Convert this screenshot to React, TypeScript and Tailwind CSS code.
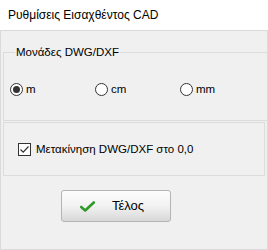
import { useState } from 'react'

type Unit = 'm' | 'cm' | 'mm'

function Radio({ checked, label, onClick }: { checked: boolean; label: string; onClick: () => void }) {
  return (
    <button onClick={onClick} className="flex items-center gap-[3px] w-[85px] text-left">
      <span className="w-[13px] h-[13px] rounded-full border border-[#333333] bg-white flex items-center justify-center">
        {checked && <span className="w-[7px] h-[7px] rounded-full bg-[#333333]" />}
      </span>
      <span className="leading-[14px]">{label}</span>
    </button>
  )
}

export default function App() {
  const [unit, setUnit] = useState<Unit>('m')
  const [moveOrigin, setMoveOrigin] = useState(true)

  return (
    <div className="w-[268px] h-[250px] bg-white text-[11.5px] text-black font-['Liberation_Sans',Arial,sans-serif]">
      {/* Title bar */}
      <div className="h-[30px] pl-[8px] flex items-center text-[12px]">Ρυθμίσεις Εισαχθέντος CAD</div>

      {/* Dialog body */}
      <div className="h-[220px] bg-[#f0f0f0] border border-[#dadada] px-[2px] flex flex-col">
        <fieldset className="mt-[14px] h-[76px] border border-[#dcdcdc] px-[6px]">
          <legend className="ml-[5px] px-[1px] leading-[14px]">Μονάδες DWG/DXF</legend>
          <div className="flex mt-[23px]">
            <Radio checked={unit === 'm'} label="m" onClick={() => setUnit('m')} />
            <Radio checked={unit === 'cm'} label="cm" onClick={() => setUnit('cm')} />
            <Radio checked={unit === 'mm'} label="mm" onClick={() => setUnit('mm')} />
          </div>
        </fieldset>

        <div className="mt-[1px] h-[54px] border border-[#dcdcdc] pl-[14px] flex items-center">
          <button onClick={() => setMoveOrigin(!moveOrigin)} className="flex items-center gap-[5px]">
            <span className="w-[13px] h-[13px] border border-[#333333] bg-white flex items-center justify-center">
              {moveOrigin && (
                <svg width="11" height="11" viewBox="0 0 11 11">
                  <path d="M1.5 5.5 L4.2 8.2 L9.5 2.5" fill="none" stroke="#333333" strokeWidth="1.2" />
                </svg>
              )}
            </span>
            <span className="leading-[14px]">Μετακίνηση DWG/DXF στο 0,0</span>
          </button>
        </div>

        <div className="flex pl-[58px] mt-[14px]">
          <button className="w-[110px] h-[32px] rounded-[3px] border border-[#b4b4b4] bg-gradient-to-b from-[#fdfdfd] via-[#f2f2f2] to-[#d8d8d8] flex items-center text-[13px]">
            <svg className="ml-[18px]" width="15" height="11" viewBox="0 0 15 11">
              <path d="M1.2 6 L5.2 9.5 L13.8 1.5" fill="none" stroke="#2e9a2a" strokeWidth="2.6" strokeLinecap="round" strokeLinejoin="round" />
            </svg>
            <span className="ml-[17px]">Τέλος</span>
          </button>
        </div>
      </div>
    </div>
  )
}
